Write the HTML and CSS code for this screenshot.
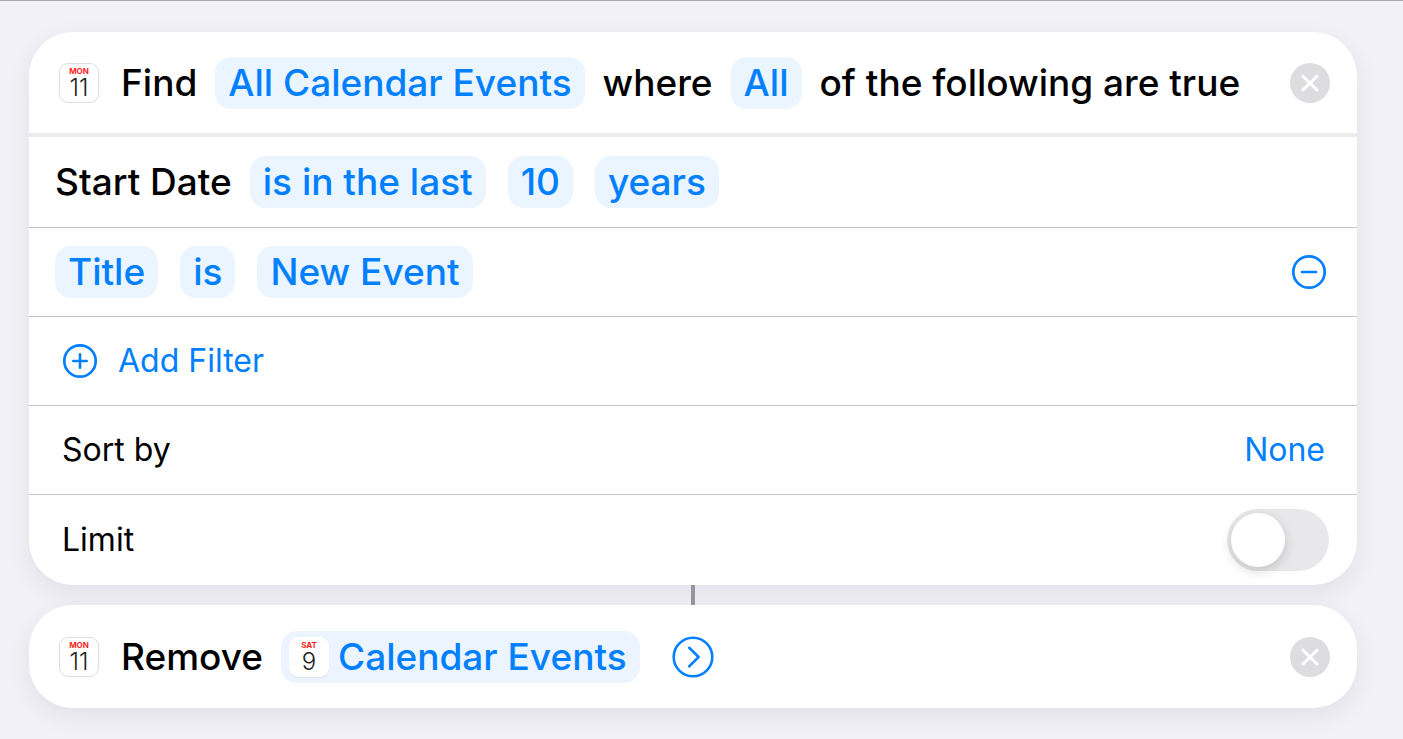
FILE: index.html
```html
<!DOCTYPE html>
<html lang="en">
<head>
<meta charset="utf-8">
<title>Shortcut editor</title>
<link rel="stylesheet" href="styles.css">
</head>
<body>
<main class="editor">
  <section class="card">
    <header class="row header">
      <span class="calendar"><span class="day">MON</span><span class="date">11</span></span>
      <div class="phrase">
        <span>Find</span>
        <button class="chip">All Calendar Events</button>
        <span>where</span>
        <button class="chip">All</button>
        <span>of the following are true</span>
      </div>
      <button class="icon-button end" aria-label="Remove action">
        <svg width="40" height="40" viewBox="0 0 40 40"><circle cx="20" cy="20" r="20" fill="#dddde0"/><path d="M13 13.2 27 27M27 13.2 13 27" stroke="#fff" stroke-width="3" stroke-linecap="round"/></svg>
      </button>
    </header>
    <div class="row">
      <div class="phrase">
        <span>Start Date</span>
        <span class="chips">
          <button class="chip">is in the last</button>
          <button class="chip">10</button>
          <button class="chip">years</button>
        </span>
      </div>
    </div>
    <div class="row">
      <div class="chips">
        <button class="chip">Title</button>
        <button class="chip">is</button>
        <button class="chip">New Event</button>
      </div>
      <button class="icon-button remove-filter" aria-label="Remove filter">
        <svg width="36" height="36" viewBox="0 0 36 36" fill="none" stroke="#007fff" stroke-linecap="round"><circle cx="18" cy="18" r="15.7" stroke-width="2.7"/><path d="M11 18H25" stroke-width="2.7"/></svg>
      </button>
    </div>
    <div class="row option">
      <button class="add-filter">
        <svg width="36" height="36" viewBox="0 0 36 36" fill="none" stroke="#007fff" stroke-linecap="round"><circle cx="18" cy="18" r="15.7" stroke-width="2.7"/><path d="M11.3 18H24.7M18 11.3V24.7" stroke-width="2.6"/></svg>
        <span>Add Filter</span>
      </button>
    </div>
    <div class="row option">
      <span id="sort-label">Sort by</span>
      <button class="value" aria-describedby="sort-label">None</button>
    </div>
    <div class="row option">
      <label for="limit">Limit</label>
      <input class="switch" id="limit" type="checkbox" role="switch">
    </div>
  </section>
  <div class="connector"></div>
  <section class="card">
    <div class="row header">
      <span class="calendar"><span class="day">MON</span><span class="date">11</span></span>
      <div class="phrase">
        <span>Remove</span>
        <button class="chip variable"><span class="calendar plain"><span class="day">SAT</span><span class="date">9</span></span>Calendar Events</button>
      </div>
      <button class="icon-button expand" aria-label="Show more">
        <svg width="42" height="42" viewBox="0 0 42 42" fill="none" stroke="#0080ff" stroke-linecap="round" stroke-linejoin="round"><circle cx="21" cy="21" r="19.3" stroke-width="2.6"/><path d="M17.2 11.8 26.6 21 17.2 30.4" stroke-width="2.6"/></svg>
      </button>
      <button class="icon-button end" aria-label="Remove action">
        <svg width="40" height="40" viewBox="0 0 40 40"><circle cx="20" cy="20" r="20" fill="#dddde0"/><path d="M13 13.2 27 27M27 13.2 13 27" stroke="#fff" stroke-width="3" stroke-linecap="round"/></svg>
      </button>
    </div>
  </section>
</main>
</body>
</html>
```
FILE: styles.css
```css
* {
  box-sizing: border-box;
}

body {
  margin: 0;
  min-height: 100vh;
  border-top: 1px solid #aaa9b0;
  background: #f2f1f7;
  color: #000;
  font-family: Inter, "Liberation Sans", sans-serif;
}

button {
  margin: 0;
  padding: 0;
  border: 0;
  background: none;
  color: #007fff;
  font: inherit;
  cursor: pointer;
}

svg {
  display: block;
}

.editor {
  padding: 31px 46px 31px 29px;
}

.card {
  border-radius: 44px;
  background: #fff;
  box-shadow: 0 8px 24px rgba(40, 35, 70, 0.08);
}

.row {
  display: flex;
  align-items: center;
  justify-content: space-between;
  min-height: 89px;
  padding: 0 28px 0 26px;
}

.row + .row {
  border-top: 1px solid #c6c6c8;
}

.header {
  min-height: 103px;
  padding: 0 27px 0 30px;
}

header.header {
  min-height: 101px;
}

.header + .row {
  min-height: 94px;
  border-top: 4px solid #ececef;
}

.phrase,
.chips {
  display: flex;
  align-items: center;
  font-size: 37px;
  font-weight: 500;
  line-height: 48px;
  white-space: nowrap;
}

.phrase {
  gap: 18px;
}

.chips {
  gap: 22px;
}

.header .phrase {
  margin-left: 22px;
}

.chip {
  min-height: 52px;
  padding: 2px 13px;
  border-radius: 16px;
  background: #ebf5ff;
}

.variable {
  display: flex;
  align-items: center;
  gap: 9px;
  padding: 0 13px 0 8px;
  background: #ecf4ff;
}

.icon-button {
  flex: none;
}

.end {
  margin-left: auto;
}

.remove-filter {
  margin-right: 2px;
}

.expand {
  margin-left: 32px;
}

.calendar {
  display: flex;
  flex: none;
  flex-direction: column;
  align-items: center;
  width: 40px;
  height: 40px;
  padding-top: 3px;
  border: 1px solid #dededf;
  border-radius: 9px;
  background: #fff;
  color: #222;
}

.plain {
  border-color: #fff;
  box-shadow: 0 1px 1px rgba(0, 0, 0, 0.08);
}

.day {
  color: #ff1f25;
  font-size: 8px;
  font-weight: 700;
  line-height: 8px;
}

.date {
  font-size: 24px;
  font-weight: 300;
  line-height: 26px;
}

.option {
  padding: 0 28px 0 33px;
  font-size: 32px;
  line-height: 40px;
}

.option:last-child {
  min-height: 91px;
}

.add-filter {
  display: flex;
  align-items: center;
  gap: 20px;
}

.value {
  margin-right: 4px;
}

.switch {
  display: flex;
  appearance: none;
  width: 102px;
  height: 62px;
  margin: 0;
  padding: 4px;
  border-radius: 31px;
  background: #e8e8ea;
  cursor: pointer;
}

.switch::before {
  width: 54px;
  height: 54px;
  border-radius: 50%;
  background: #fff;
  box-shadow: 0 4px 12px rgba(0, 0, 0, 0.16);
  content: "";
}

.switch:checked {
  justify-content: flex-end;
  background: #34c759;
}

.connector {
  width: 4px;
  height: 20px;
  margin: 0 auto;
  background: #96969f;
}
```
